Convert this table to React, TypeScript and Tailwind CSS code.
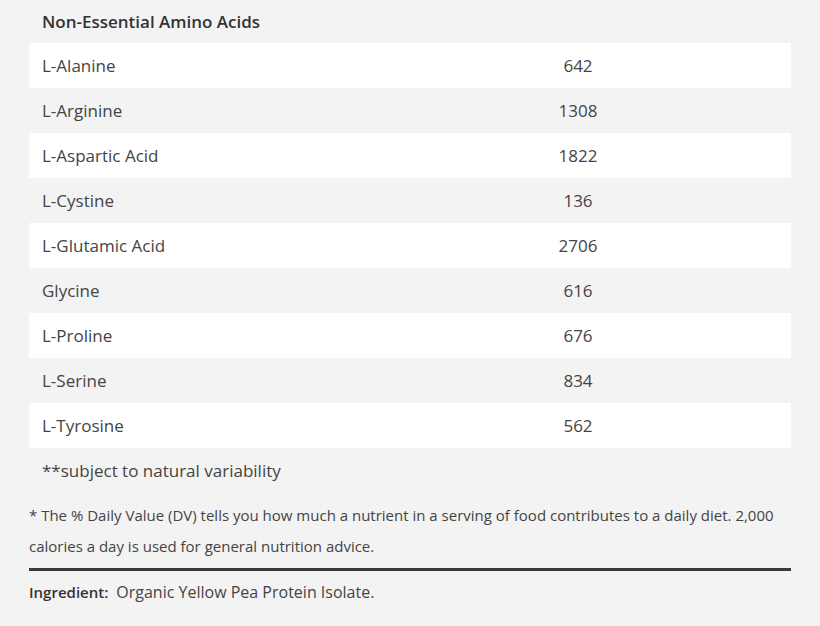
import React from "react";

const rows: [string, string][] = [
  ["L-Alanine", "642"],
  ["L-Arginine", "1308"],
  ["L-Aspartic Acid", "1822"],
  ["L-Cystine", "136"],
  ["L-Glutamic Acid", "2706"],
  ["Glycine", "616"],
  ["L-Proline", "676"],
  ["L-Serine", "834"],
  ["L-Tyrosine", "562"],
];

export default function App() {
  return (
    <div
      className="w-[820px] h-[626px] bg-[#f3f3f3] text-[#444444] overflow-hidden"
      style={{ fontFamily: '"Open Sans", sans-serif' }}
    >
      <div className="ml-[29px] w-[762px]">
        <div className="h-[43px] flex items-center pl-[13px] text-[17px] font-semibold text-[#333]">
          Non-Essential Amino Acids
        </div>
        {rows.map(([name, val], i) => (
          <div
            key={name}
            className={`grid grid-cols-[336px_1fr] h-[45px] items-center text-[17px] ${
              i % 2 === 0 ? "bg-white" : "bg-[#f3f3f3]"
            }`}
          >
            <div className="pl-[13px]">{name}</div>
            <div className="text-center">{val}</div>
          </div>
        ))}
        <div className="h-[45px] flex items-center pl-[13px] text-[17px]">
          **subject to natural variability
        </div>
        <div className="text-[15px] leading-[31px] pt-[7px] pr-[10px]">
          * The % Daily Value (DV) tells you how much a nutrient in a serving of food contributes to a daily diet. 2,000 calories a day is used for general nutrition advice.
        </div>
        <div className="mt-[6px] h-[3px] bg-[#3a3a3a]" />
        <div className="mt-[9px] text-[16px] flex items-baseline gap-[8px]">
          <span className="font-semibold text-[15px] text-[#333]">Ingredient:</span>
          <span>Organic Yellow Pea Protein Isolate.</span>
        </div>
      </div>
    </div>
  );
}
